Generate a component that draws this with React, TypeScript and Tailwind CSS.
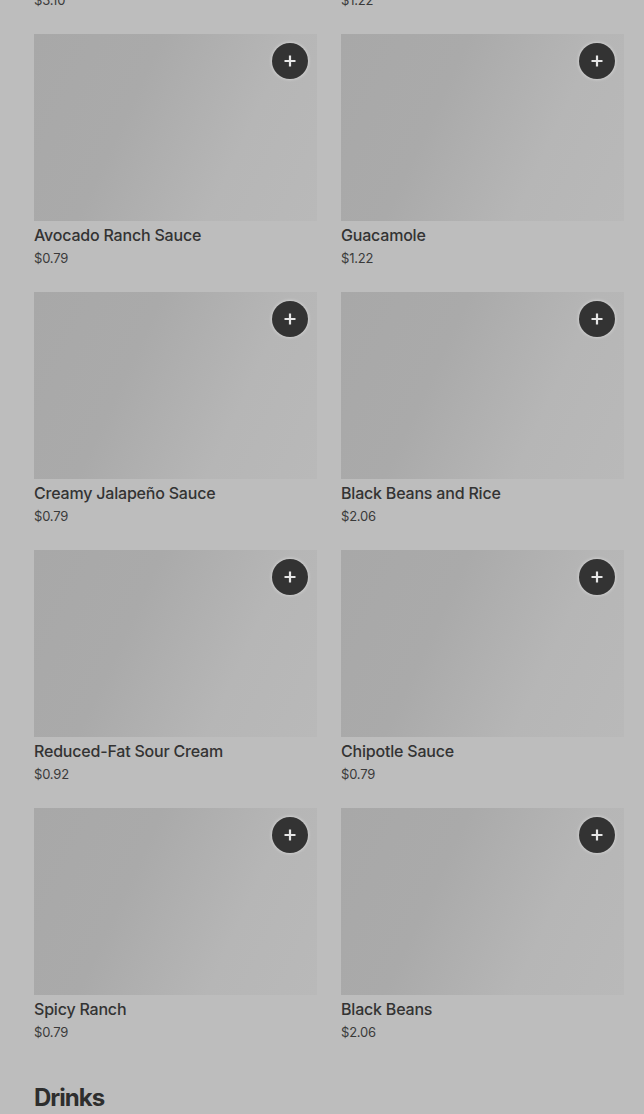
const items = [
  { name: 'Avocado Ranch Sauce', price: '$0.79' },
  { name: 'Guacamole', price: '$1.22' },
  { name: 'Creamy Jalapeño Sauce', price: '$0.79' },
  { name: 'Black Beans and Rice', price: '$2.06' },
  { name: 'Reduced-Fat Sour Cream', price: '$0.92' },
  { name: 'Chipotle Sauce', price: '$0.79' },
  { name: 'Spicy Ranch', price: '$0.79' },
  { name: 'Black Beans', price: '$2.06' }
];

const previous = [
  { name: 'Cheese Quesadilla', price: '$3.10' },
  { name: 'Pico de Gallo', price: '$1.22' }
];

function PlusIcon(): JSX.Element {
  return (
    <svg width="14" height="14" viewBox="0 0 14 14" fill="none">
      <path d="M7 1.5v11M1.5 7h11" stroke="#e6e6e6" strokeWidth="2.2" />
    </svg>
  );
}

function ItemCard({ name, price }: { name: string; price: string }): JSX.Element {
  return (
    <div className="flex flex-col">
      <div className="flex h-[187px] justify-end bg-[linear-gradient(115deg,#a8a8a8_0%,#aaaaaa_35%,#b6b6b6_70%,#b9b9b9_100%)] p-[9px]">
        <button
          type="button"
          className="flex h-9 w-9 items-center justify-center rounded-full bg-[#333333] shadow-[0_0_3px_1px_rgba(255,255,255,0.35)]"
        >
          <PlusIcon />
        </button>
      </div>
      <div className="mt-1 text-base font-medium leading-5 tracking-[-0.2px] text-[#333333]">{name}</div>
      <div className="mt-[3px] text-[13px] leading-5 tracking-[-0.2px] text-[#3a3a3a]">{price}</div>
    </div>
  );
}

export default function App(): JSX.Element {
  return (
    <div className="h-[1114px] w-[644px] overflow-hidden bg-[#bdbdbd] font-['Inter','Liberation_Sans',sans-serif]">
      <div className="mt-[-224px] grid grid-cols-2 gap-x-6 gap-y-6 pl-[34px] pr-5">
        {previous.map((item) => (
          <ItemCard key={item.name} name={item.name} price={item.price} />
        ))}
        {items.map((item) => (
          <ItemCard key={item.name} name={item.name} price={item.price} />
        ))}
      </div>
      <h2 className="mt-10 pl-[34px] text-2xl font-bold leading-8 tracking-[-1px] text-[#2e2e2e]">Drinks</h2>
    </div>
  );
}
